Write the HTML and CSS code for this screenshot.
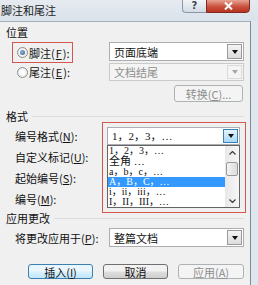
FILE: index.html
```html
<!DOCTYPE html>
<html lang="zh-CN">
<head>
    <meta charset="UTF-8">
    <title>脚注和尾注</title>
    <link rel="stylesheet" href="styles.css">
</head>
<body>
    <div class="window">
        <div class="titlebar">
            <span class="title">脚注和尾注</span>
            <div class="caption">
                <span class="cap-help">?</span>
                <span class="cap-close">
                    <svg width="9" height="8" viewBox="0 0 9 8"><path d="M1 0.5 L8 7.5 M8 0.5 L1 7.5" stroke="#fff" stroke-width="2"/></svg>
                </span>
            </div>
        </div>

        <div class="body">
            <div class="group-title plain">位置</div>
            <div class="row row-first">
                <label class="radio-box marked"><span class="radio checked"></span>脚注(<u>F</u>):</label>
                <div class="combo">
                    <span class="combo-text">页面底端</span>
                    <span class="combo-btn"><i class="tri"></i></span>
                </div>
            </div>
            <div class="row row-second">
                <label class="radio-box"><span class="radio"></span>尾注(<u>E</u>):</label>
                <div class="combo disabled">
                    <span class="combo-text">文档结尾</span>
                    <span class="combo-btn"><i class="tri"></i></span>
                </div>
            </div>
            <div class="row row-convert">
                <button class="btn disabled convert">转换(<u>C</u>)...</button>
            </div>

            <div class="group-title spaced">格式</div>
            <div class="format">
                <div class="labels">
                    <div>编号格式(<u>N</u>):</div>
                    <div>自定义标记(<u>U</u>):</div>
                    <div>起始编号(<u>S</u>):</div>
                    <div>编号(<u>M</u>):</div>
                </div>
                <div class="marked-box">
                    <div class="combo focus">
                        <span class="combo-text list-font">1，2，3，…</span>
                        <span class="combo-btn"><i class="tri"></i></span>
                    </div>
                    <div class="droplist">
                        <div class="items list-font">
                            <div class="item">1，2，3，…</div>
                            <div class="item wide">全角 …</div>
                            <div class="item">a，b，c，…</div>
                            <div class="item selected">A，B，C，…</div>
                            <div class="item">i，ii，iii，…</div>
                            <div class="item">I，II，III，…</div>
                        </div>
                        <div class="scrollbar">
                            <span class="sb-arrow">
                                <svg width="7" height="4" viewBox="0 0 7 4"><path d="M0.5 3.5 L3.5 0.5 L6.5 3.5" fill="none" stroke="#3c3c3c" stroke-width="1.2"/></svg>
                            </span>
                            <span class="sb-thumb"></span>
                            <span class="sb-space"></span>
                            <span class="sb-arrow">
                                <svg width="7" height="4" viewBox="0 0 7 4"><path d="M0.5 0.5 L3.5 3.5 L6.5 0.5" fill="none" stroke="#3c3c3c" stroke-width="1.2"/></svg>
                            </span>
                        </div>
                    </div>
                </div>
            </div>

            <div class="group-title">应用更改</div>
            <div class="row row-apply">
                <span class="apply-label">将更改应用于(<u>P</u>):</span>
                <div class="combo">
                    <span class="combo-text">整篇文档</span>
                    <span class="combo-btn"><i class="tri"></i></span>
                </div>
            </div>

            <div class="buttons">
                <button class="btn default">插入(<u>I</u>)</button>
                <button class="btn">取消</button>
                <button class="btn disabled">应用(<u>A</u>)</button>
            </div>
        </div>
    </div>
</body>
</html>
```

FILE: styles.css
```css
* {
    margin: 0;
    padding: 0;
    box-sizing: border-box;
}

body {
    font-family: "Noto Sans CJK SC", "Noto Sans", sans-serif;
    font-size: 11px;
    color: #111;
    background: #dfe6ee;
}

u {
    text-decoration: underline;
    text-underline-offset: 1px;
}

.window {
    width: 258px;
    height: 285px;
    overflow: hidden;
    background: #dfe6ee;
    display: flex;
    flex-direction: column;
}

/* title bar */
.titlebar {
    height: 21px;
    flex: none;
    position: relative;
    background: linear-gradient(#e6ebf1, #d9e1ea);
}
.title {
    display: block;
    padding: 3px 0 0 1px;
    line-height: 14px;
    color: #1a1a1a;
}
.caption {
    position: absolute;
    top: -1px;
    left: 182px;
    display: flex;
}
.cap-help {
    width: 24px;
    height: 14px;
    border: 1px solid #8a96a3;
    border-right: none;
    border-radius: 0 0 0 4px;
    background: linear-gradient(#f2f5f8, #d3dbe4);
    font-family: "DejaVu Sans", sans-serif;
    font-size: 10px;
    font-weight: bold;
    line-height: 12px;
    text-align: center;
    color: #3a4756;
}
.cap-close {
    width: 44px;
    height: 14px;
    border: 1px solid #7d2a22;
    border-radius: 0 0 4px 0;
    background: linear-gradient(#e8a493, #c9523e 55%, #b8321f);
    display: flex;
    align-items: center;
    justify-content: center;
}

/* dialog body */
.body {
    width: 251px;
    flex: 1;
    background: #f0f0f0;
    border-top: 1px solid #a4afbb;
    border-right: 1px solid #7e8a97;
    padding: 4px 6px 0 6px;
}

.group-title {
    height: 12px;
    line-height: 12px;
    display: flex;
    align-items: center;
    gap: 4px;
}
.group-title::after {
    content: "";
    flex: 1;
    height: 1px;
    background: #dcdcdc;
}
.group-title.plain::after {
    background: none;
}
.group-title.spaced {
    margin-top: 8px;
}

.row {
    display: flex;
}
.row-first {
    margin-top: 4px;
    height: 21px;
    align-items: flex-start;
}
.row-second {
    height: 18px;
    align-items: center;
}
.row-convert {
    margin-top: 4px;
    height: 17px;
    justify-content: flex-end;
}
.row-apply {
    margin-top: 5px;
    height: 17px;
    align-items: center;
}

.radio-box {
    margin-left: 6px;
    width: 61px;
    height: 21px;
    border: 1px solid transparent;
    padding-left: 4px;
    display: flex;
    align-items: center;
    gap: 1px;
    white-space: nowrap;
}
.row-second .radio-box {
    height: 18px;
}
.radio-box.marked {
    border-color: #d2574f;
}
.radio {
    flex: none;
    width: 11px;
    height: 11px;
    border-radius: 50%;
    border: 1px solid #8e8f8f;
    background: radial-gradient(circle, #fff 30%, #dcdcdc);
    position: relative;
}
.radio.checked::after {
    content: "";
    position: absolute;
    left: 2px;
    top: 2px;
    width: 5px;
    height: 5px;
    border-radius: 50%;
    background: radial-gradient(circle at 40% 40%, #8fb6d8, #2a5a8a);
}

/* combo boxes */
.combo {
    flex: none;
    margin-left: auto;
    width: 135px;
    height: 19px;
    background: #fff;
    border: 1px solid #abadb3;
    display: flex;
    align-items: center;
    padding: 1px;
}
.row-second .combo {
    height: 18px;
}
.combo-text {
    flex: 1;
    padding-left: 3px;
    line-height: 14px;
    white-space: nowrap;
}
.combo-btn {
    flex: none;
    width: 15px;
    height: 100%;
    border: 1px solid #9a9a9a;
    background: linear-gradient(#f4f4f4, #dcdcdc);
    display: flex;
    align-items: center;
    justify-content: center;
}
.tri {
    width: 0;
    height: 0;
    border-left: 3px solid transparent;
    border-right: 3px solid transparent;
    border-top: 4px solid #111;
}
.combo.disabled {
    background: #f4f4f4;
    border-color: #cacaca;
    color: #8d8d8d;
}
.combo.disabled .combo-btn {
    border-color: #dadada;
    background: #f4f4f4;
}
.combo.disabled .tri {
    border-top-color: #a6a6a6;
}
.combo.focus {
    margin-left: 0;
    width: 133px;
    height: 18px;
}
.combo.focus .combo-btn {
    border-color: #3c7fb1;
    background: linear-gradient(#e5f4fc, #a7d9f5);
}

/* format section */
.format {
    height: 90px;
    display: grid;
    grid-template-columns: 96px 144px;
}
.labels {
    min-width: 0;
    padding: 4px 0 0 9px;
    line-height: 21px;
    white-space: nowrap;
}
.marked-box {
    width: 144px;
    height: 91px;
    border: 1px solid #d2574f;
    padding: 4px 5px 0 4px;
}
.list-font {
    font-family: "Liberation Serif", "Noto Sans CJK SC", serif;
}
.droplist {
    width: 133px;
    height: 63px;
    background: #fff;
    border: 1px solid #646464;
    display: flex;
}
.items {
    flex: 1;
    min-width: 0;
    overflow: hidden;
}
.item {
    height: 10px;
    line-height: 10px;
    padding-left: 1px;
    white-space: nowrap;
    font-size: 10px;
}
.item.wide {
    height: 11px;
    line-height: 11px;
    font-size: 11px;
}
.item.selected {
    background: #3399ff;
    color: #fff;
}
.scrollbar {
    flex: none;
    width: 14px;
    background: linear-gradient(90deg, #e8e8e8, #f6f6f6);
    display: flex;
    flex-direction: column;
    align-items: center;
}
.sb-arrow {
    height: 13px;
    display: flex;
    align-items: center;
    justify-content: center;
}
.sb-thumb {
    width: 12px;
    height: 14px;
    margin-top: 3px;
    border: 1px solid #9a9a9a;
    border-radius: 2px;
    background: linear-gradient(90deg, #f3f3f3, #dcdcdc);
}
.sb-space {
    flex: 1;
}

.apply-label {
    padding-left: 9px;
    white-space: nowrap;
}

/* buttons */
.btn {
    font-family: inherit;
    font-size: 11px;
    color: #111;
    height: 15px;
    border: 1px solid #707070;
    border-radius: 3px;
    background: linear-gradient(#f2f2f2 45%, #dddddd 55%, #cfcfcf);
    line-height: 12px;
}
.btn.default {
    border-color: #3c7fb1;
    background: linear-gradient(#eaf6fd 45%, #d9f0fc 55%, #bee6fd);
}
.btn.disabled {
    border-color: #adb2b5;
    background: #f4f4f4;
    color: #8d8d8d;
}
.convert {
    width: 69px;
    height: 17px;
    margin-right: 1px;
}
.buttons {
    margin-top: 18px;
    display: flex;
    justify-content: flex-end;
    gap: 10px;
}
.buttons .btn {
    width: 65px;
}
.buttons .btn:last-child {
    width: 66px;
}
```
